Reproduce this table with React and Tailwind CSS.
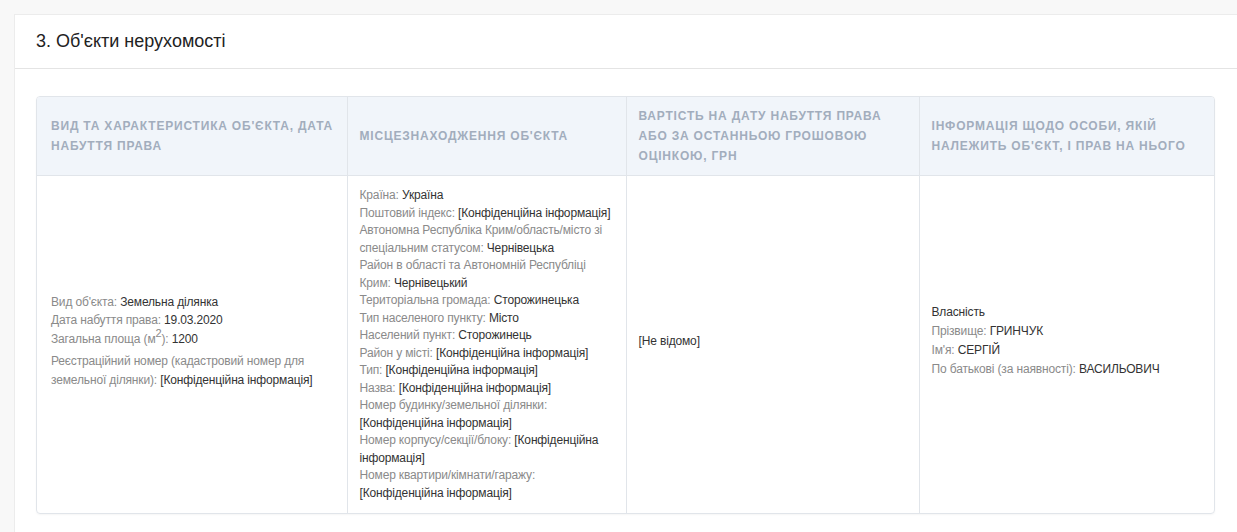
import React from "react";

const L = ({ children }) => <span className="text-[#8a8a8a]">{children}</span>;
const V = ({ children }) => <span className="text-[#333]">{children}</span>;

export default function App() {
  const th =
    "align-middle text-left font-bold uppercase text-[12px] leading-[20px] tracking-[0.8px] text-[#a2adbd] px-3 py-[9px] border-r border-[#e1e5ea] last:border-r-0";
  const td = "align-middle px-3 border-r border-[#e1e5ea] last:border-r-0";
  return (
    <div
      className="bg-[#f8f8f8] w-[1237px] h-[532px] overflow-hidden pt-[14px] pl-[14px]"
      style={{ fontFamily: '"Liberation Sans", Arial, sans-serif' }}
    >
      <div className="bg-white border border-[#ececec] w-[1240px] h-[600px]">
        <div className="h-[54px] flex items-center px-[21px] border-b border-[#e4e4e4]">
          <h2 className="text-[18px] text-[#222] font-normal">3. Об'єкти нерухомості</h2>
        </div>
        <div className="pt-[27px] pl-[21px]">
          <div className="w-[1179px] border border-[#e1e5ea] rounded-[4px] overflow-hidden shadow-[0_1px_2px_rgba(0,0,0,0.04)]">
            <table className="w-full border-collapse table-fixed">
              <colgroup>
                <col className="w-[310px]" />
                <col className="w-[279px]" />
                <col className="w-[293px]" />
                <col />
              </colgroup>
              <thead>
                <tr className="bg-[#f1f5fa] border-b border-[#e1e5ea]">
                  <th className={th + " pl-[14px]"}>Вид та характеристика об'єкта, дата набуття права</th>
                  <th className={th}>Місцезнаходження об'єкта</th>
                  <th className={th}>Вартість на дату набуття права або за останньою грошовою оцінкою, грн</th>
                  <th className={th}>Інформація щодо особи, якій належить об'єкт, і прав на нього</th>
                </tr>
              </thead>
              <tbody className="text-[12px] leading-[17.5px] tracking-[-0.15px]">
                <tr>
                  <td className={td + " pl-[14px] pt-[11px] pb-[17px]"}>
                    <div className="leading-[18.5px]">
                      <div><L>Вид об'єкта:</L> <V>Земельна ділянка</V></div>
                      <div><L>Дата набуття права:</L> <V>19.03.2020</V></div>
                      <div><L>Загальна площа (м<sup className="text-[11px]">2</sup>):</L> <V>1200</V></div>
                    </div>
                    <div className="mt-[4px] leading-[19px]">
                      <L>Реєстраційний номер (кадастровий номер для земельної ділянки):</L>{" "}
                      <V>[Конфіденційна інформація]</V>
                    </div>
                  </td>
                  <td className={td + " py-[11px]"}>
                    <div><L>Країна:</L> <V>Україна</V></div>
                    <div><L>Поштовий індекс:</L> <V>[Конфіденційна інформація]</V></div>
                    <div><L>Автономна Республіка Крим/область/місто зі спеціальним статусом:</L> <V>Чернівецька</V></div>
                    <div><L>Район в області та Автономній Республіці Крим:</L> <V>Чернівецький</V></div>
                    <div><L>Територіальна громада:</L> <V>Сторожинецька</V></div>
                    <div><L>Тип населеного пункту:</L> <V>Місто</V></div>
                    <div><L>Населений пункт:</L> <V>Сторожинець</V></div>
                    <div><L>Район у місті:</L> <V>[Конфіденційна інформація]</V></div>
                    <div><L>Тип:</L> <V>[Конфіденційна інформація]</V></div>
                    <div><L>Назва:</L> <V>[Конфіденційна інформація]</V></div>
                    <div><L>Номер будинку/земельної ділянки:</L> <V>[Конфіденційна інформація]</V></div>
                    <div><L>Номер корпусу/секції/блоку:</L> <V>[Конфіденційна інформація]</V></div>
                    <div><L>Номер квартири/кімнати/гаражу:</L> <V>[Конфіденційна інформація]</V></div>
                  </td>
                  <td className={td + " pt-[11px] pb-[17px]"}>
                    <V>[Не відомо]</V>
                  </td>
                  <td className={td + " pt-[11px] pb-[18px]"}>
                    <div className="leading-[19px]">
                      <div><V>Власність</V></div>
                      <div><L>Прізвище:</L> <V>ГРИНЧУК</V></div>
                      <div><L>Ім'я:</L> <V>СЕРГІЙ</V></div>
                      <div><L>По батькові (за наявності):</L> <V>ВАСИЛЬОВИЧ</V></div>
                    </div>
                  </td>
                </tr>
              </tbody>
            </table>
          </div>
        </div>
      </div>
    </div>
  );
}
